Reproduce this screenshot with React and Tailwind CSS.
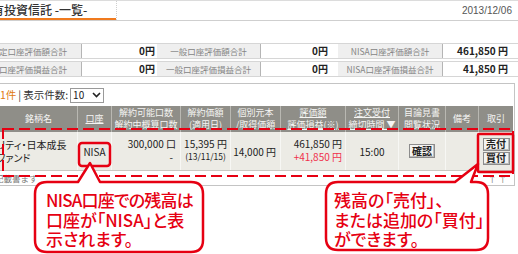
import React from 'react';

const cols = 'grid grid-cols-[77px_34px_69px_50px_50px_65px_53px_47px_33px_35px]';

const HeadCell = ({ children, link, first }) => (
  <div
    className={`flex flex-col items-center justify-center whitespace-nowrap overflow-hidden ${
      first ? '' : 'border-l border-[#b9b8b2]'
    } ${link ? 'underline underline-offset-1' : ''}`}
  >
    {children}
  </div>
);

const Cell = ({ children, className = '', first }) => (
  <div className={`flex flex-col justify-center ${first ? '' : 'border-l border-[#f7f7f4]'} ${className}`}>
    {children}
  </div>
);

const SmallButton = ({ children, className = '' }) => (
  <div
    className={`flex items-center justify-center bg-[#f3f3f1] border border-[#8c8c8c] text-[10px] font-bold text-[#222] leading-none shadow-[inset_-1px_-1px_0_#bdbdbd] ${className}`}
  >
    {children}
  </div>
);

const SummaryRow = ({ items }) => (
  <div className="grid grid-cols-[82px_75px_104px_77px_105px_69px] h-[16px] border-y border-[#d6d6d6] text-[10px] leading-none">
    {items.map((it, i) =>
      i % 2 === 0 ? (
        <div
          key={i}
          className={`flex items-center bg-[#efefef] border-r border-[#b5b5b5] text-[8.5px] text-[#858585] whitespace-nowrap overflow-hidden ${
            i === 0 ? 'justify-end pr-[14px]' : 'justify-center'
          }`}
        >
          {it}
        </div>
      ) : (
        <div key={i} className={`flex items-center justify-end font-bold text-[#222] ${i === 1 ? 'pr-[2px]' : i === 3 ? 'pr-[10px]' : 'pr-[4px]'}`}>
          {it}
        </div>
      )
    )}
  </div>
);

export default function App() {
  const red = '#e60012';
  return (
    <div className="relative w-[518px] h-[254px] overflow-hidden bg-white text-[#222] font-['Noto_Sans_CJK_JP',sans-serif]">
      {/* title bar */}
      <div className="flex h-[21px] border-t border-[#dcdcdc] border-b border-b-[#cfcfcf]">
        <div className="w-[116px] border-b-2 border-[#f07a1e] overflow-hidden">
          <div className="ml-[-8px] mt-[1px] text-[12px] leading-[16px] font-medium text-[#333] whitespace-nowrap">
            有投資信託 -一覧-
          </div>
        </div>
        <div className="flex-1 flex items-center justify-end pr-[6px] border-l border-dotted border-[#cfcfcf] text-[10px] text-[#555] font-['Liberation_Sans',sans-serif]">
          2013/12/06
        </div>
      </div>

      {/* summary */}
      <div className="mt-[22px] flex flex-col gap-[2px]">
        <SummaryRow items={['特定口座評価額合計', '0円', '一般口座評価額合計', '0円', 'NISA口座評価額合計', '461,850 円']} />
        <SummaryRow items={['特定口座評価損益合計', '0円', '一般口座評価損益合計', '0円', 'NISA口座評価損益合計', '41,850 円']} />
      </div>

      {/* main list box */}
      <div className="mt-[6px] w-[515px] h-[103px] border-t border-r border-b border-[#c4c4c4]">
        <div className="flex items-center h-[22px] text-[10.5px] leading-none whitespace-nowrap">
          <span className="text-[#e07a10]">1件</span>
          <span className="mx-[2px] text-[#444]">|</span>
          <span className="text-[#333]">表示件数:</span>
          <div className="ml-[2px] flex items-center justify-between w-[34px] h-[15px] border border-[#9a9a9a] px-[2px] text-[10px]">
            <span>10</span>
            <svg width="9" height="6" viewBox="0 0 9 6">
              <path d="M1 1 L4.5 4.5 L8 1" fill="none" stroke="#222" strokeWidth="1.6" />
            </svg>
          </div>
        </div>

        <div className="w-[513px]">
          <div className={`${cols} h-[26px] bg-[#8f8e88] text-[#f5f5f3] text-[9px] leading-[12px]`}>
            <HeadCell first>銘柄名</HeadCell>
            <HeadCell link>口座</HeadCell>
            <HeadCell>
              <span>解約可能口数</span>
              <span>解約中概算口数</span>
            </HeadCell>
            <HeadCell>
              <span>解約価額</span>
              <span>(適用日)</span>
            </HeadCell>
            <HeadCell>
              <span>個別元本</span>
              <span>/取得価額</span>
            </HeadCell>
            <HeadCell link>
              <span>評価額</span>
              <span>評価損益(※)</span>
            </HeadCell>
            <HeadCell>
              <span className="underline underline-offset-1">注文受付</span>
              <span className="underline underline-offset-1">締切時間 ▼</span>
            </HeadCell>
            <HeadCell>
              <span>目論見書</span>
              <span>閲覧状況</span>
            </HeadCell>
            <HeadCell>備考</HeadCell>
            <HeadCell>取引</HeadCell>
          </div>

          <div className={`${cols} h-[39px] bg-[#ecebe5] border-b border-[#c8c8c2] text-[10px] leading-[13px]`}>
            <Cell first className="overflow-hidden">
              <span className="ml-[-3px] whitespace-nowrap [font-feature-settings:'palt']">リティ・日本成長</span>
              <span className="ml-[-3px] whitespace-nowrap [font-feature-settings:'palt']">ファンド</span>
            </Cell>
            <Cell className="items-center">
              <span>NISA</span>
            </Cell>
            <Cell className="items-end pr-[4px] pb-[3px]">
              <span>300,000 口</span>
              <span className="pr-[3px]">-</span>
            </Cell>
            <Cell className="items-center pb-[3px]">
              <span>15,395 円</span>
              <span className="text-[8.5px]">(13/11/15)</span>
            </Cell>
            <Cell className="items-end pr-[4px]">
              <span>14,000 円</span>
            </Cell>
            <Cell className="items-end pr-[3px] pb-[3px]">
              <span>461,850 円</span>
              <span className="text-[#f0304a]">+41,850 円</span>
            </Cell>
            <Cell className="items-center">
              <span>15:00</span>
            </Cell>
            <Cell className="items-center">
              <SmallButton className="w-[26px] h-[14px]">確認</SmallButton>
            </Cell>
            <Cell />
            <Cell className="items-center gap-[1px]">
              <SmallButton className="w-[27px] h-[13px]">売付</SmallButton>
              <SmallButton className="w-[27px] h-[13px]">買付</SmallButton>
            </Cell>
          </div>

          <div className="flex justify-between pt-[1px] text-[8.5px] leading-[12px] text-[#777] whitespace-nowrap">
            <span className="ml-[-5px]">記載書ます</span>
            <span className="pr-[6px]">↑ ↑</span>
          </div>
        </div>
      </div>

      {/* annotations */}
      <svg className="absolute left-0 top-0 pointer-events-none" width="518" height="254" viewBox="0 0 518 254">
        <rect x="3" y="129" width="510" height="47" fill="none" stroke={red} strokeWidth="2" strokeDasharray="11 5" />
        <rect x="79" y="143" width="31" height="23" rx="3" fill="none" stroke={red} strokeWidth="2.5" />
        <rect x="478" y="134" width="35" height="38" rx="1" fill="none" stroke={red} strokeWidth="2.5" />
        <path
          d="M47 182 H78 L90 163 L100 182 H191 Q203 182 203 194 V240 Q203 252 191 252 H47 Q35 252 35 240 V194 Q35 182 47 182 Z"
          fill="#fff"
          stroke={red}
          strokeWidth="2.5"
          strokeLinejoin="round"
        />
        <path
          d="M338 182 H455 L478 164 L471 182 H476 Q488 182 488 194 V238 Q488 250 476 250 H338 Q326 250 326 238 V194 Q326 182 338 182 Z"
          fill="#fff"
          stroke={red}
          strokeWidth="2.5"
          strokeLinejoin="round"
        />
      </svg>

      <div className="absolute left-[46px] top-[190px] flex flex-col text-[17px] leading-[19.5px] font-medium text-[#e60012] whitespace-nowrap [font-feature-settings:'palt']">
        <span className="tracking-[-0.8px]">NISA口座での残高は</span>
        <span>口座が「NISA」と表</span>
        <span>示されます。</span>
      </div>
      <div className="absolute left-[334px] top-[190px] flex flex-col text-[17px] leading-[19.5px] font-medium text-[#e60012] whitespace-nowrap [font-feature-settings:'palt']">
        <span>残高の「売付」、</span>
        <span>または追加の「買付」</span>
        <span>ができます。</span>
      </div>
    </div>
  );
}
